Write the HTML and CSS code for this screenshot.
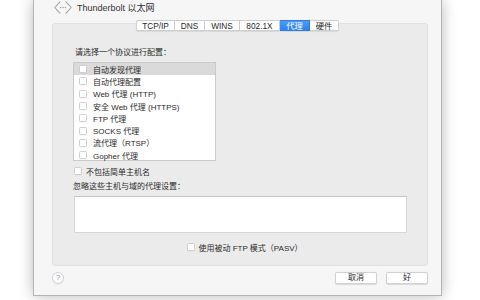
FILE: index.html
```html
<!DOCTYPE html>
<html lang="zh-CN">
<head>
    <meta charset="UTF-8">
    <meta name="viewport" content="width=device-width, initial-scale=1.0">
    <link rel="stylesheet" href="styles.css">
    <title>Thunderbolt 以太网 - 代理</title>
</head>
<body>
    <div class="window">
        <!-- title of the network service -->
        <div class="header">
            <svg class="net-icon" width="20" height="13" viewBox="0 0 20 13">
                <path d="M7 0.8 L1.8 6.5 L7 12.2" fill="none" stroke="#a3a3a3" stroke-width="1.1" stroke-linejoin="round" stroke-linecap="round"/>
                <path d="M13 0.8 L18.2 6.5 L13 12.2" fill="none" stroke="#a3a3a3" stroke-width="1.1" stroke-linejoin="round" stroke-linecap="round"/>
                <circle cx="7.6" cy="6.5" r="0.8" fill="#a3a3a3"/>
                <circle cx="10" cy="6.5" r="0.8" fill="#a3a3a3"/>
                <circle cx="12.4" cy="6.5" r="0.8" fill="#a3a3a3"/>
            </svg>
            <span class="title">Thunderbolt 以太网</span>
        </div>

        <!-- segmented tabs -->
        <div class="tabs">
            <span class="tab tab-tcp">TCP/IP</span>
            <span class="tab tab-dns">DNS</span>
            <span class="tab tab-wins">WINS</span>
            <span class="tab tab-8021x">802.1X</span>
            <span class="tab tab-proxy active">代理</span>
            <span class="tab tab-hw">硬件</span>
        </div>

        <div class="panel">
            <div class="label label-protocols">请选择一个协议进行配置：</div>
            <ul class="proto-list">
                <li class="selected"><span class="check"></span>自动发现代理</li>
                <li><span class="check"></span>自动代理配置</li>
                <li><span class="check"></span>Web 代理 (HTTP)</li>
                <li><span class="check"></span>安全 Web 代理 (HTTPS)</li>
                <li><span class="check"></span>FTP 代理</li>
                <li><span class="check"></span>SOCKS 代理</li>
                <li><span class="check"></span>流代理（RTSP）</li>
                <li><span class="check"></span>Gopher 代理</li>
            </ul>
            <div class="check-row"><span class="check"></span>不包括简单主机名</div>
            <div class="label label-bypass">忽略这些主机与域的代理设置：</div>
            <div class="bypass-box"></div>
            <div class="pasv-row"><span class="check"></span>使用被动 FTP 模式（PASV）</div>
        </div>

        <div class="footer">
            <span class="help">?</span>
            <div class="buttons">
                <button class="btn">取消</button>
                <button class="btn">好</button>
            </div>
        </div>
    </div>
</body>
</html>
```

FILE: styles.css
```css
* {
  margin: 0;
  padding: 0;
  box-sizing: border-box;
}

body {
  background-color: #fff;
  font-family: 'Liberation Sans', 'Noto Sans CJK SC', sans-serif;
  font-size: 8px;
  color: #2a2a2a;
  width: 480px;
  height: 300px;
  overflow: hidden;
}

.window {
  margin-left: 33px;
  width: 409px;
  height: 296px;
  background-color: #f6f6f6;
  border: 1px solid #b4b4b4;
  border-top: none;
  box-shadow: 0 0 14px rgba(0, 0, 0, 0.28);
}

.header {
  height: 14px;
  display: flex;
  align-items: center;
  padding-left: 19px;
  gap: 4px;
}

.net-icon {
  display: block;
}

.title {
  font-size: 9px;
  color: #333;
}

.tabs {
  margin-top: 6px;
  display: flex;
  justify-content: center;
  position: relative;
  z-index: 1;
}

.tab {
  height: 11px;
  line-height: 10px;
  font-size: 8.3px;
  text-align: center;
  background-color: #fff;
  border: 1px solid #cfcfcf;
  border-left: none;
  color: #2a2a2a;
  box-shadow: 0 0.5px 1px rgba(0, 0, 0, 0.08);
}

.tab:first-child {
  border-left: 1px solid #cfcfcf;
  border-radius: 2px 0 0 2px;
}

.tab:last-child {
  border-radius: 0 2px 2px 0;
}

.tab-tcp { width: 39px; }
.tab-dns { width: 30px; }
.tab-wins { width: 35px; }
.tab-8021x { width: 40px; }
.tab-proxy { width: 30px; }
.tab-hw { width: 29px; }

.tab.active {
  background: linear-gradient(#4c9bf8, #2d82f2);
  border-color: #2a7de8;
  color: #fff;
}

.panel {
  margin: -8px 0 0 18px;
  width: 376px;
  height: 243px;
  background-color: #ebebeb;
  border: 1px solid #e1e1e1;
  border-radius: 3px;
  padding: 24px 0 0 20px;
}

.label {
  height: 10px;
  line-height: 10px;
}

.label-protocols {
  margin-left: 2px;
}

.proto-list {
  list-style: none;
  margin-top: 4px;
  width: 143px;
  height: 99px;
  background-color: #fff;
  border: 1px solid #cacaca;
}

.proto-list li {
  height: 12.3px;
  display: flex;
  align-items: center;
  padding-left: 5px;
}

.proto-list li.selected {
  background-color: #dadada;
}

.check {
  display: inline-block;
  width: 8px;
  height: 8px;
  background-color: #fff;
  border: 1px solid #cfcfcf;
  border-radius: 1.5px;
  margin-right: 6px;
  flex-shrink: 0;
  box-shadow: 0 0.5px 0.5px rgba(0, 0, 0, 0.06);
}

.check-row {
  margin-top: 5px;
  margin-left: 1px;
  height: 10px;
  display: flex;
  align-items: center;
}

.check-row .check {
  margin-right: 4px;
}

.label-bypass {
  margin-top: 6px;
}

.bypass-box {
  margin: 4px 0 0 1px;
  width: 333px;
  height: 37px;
  background-color: #fff;
  border: 1px solid #d6d6d6;
  border-top-color: #c4c4c4;
}

.pasv-row {
  margin-top: 9px;
  margin-left: -10px;
  height: 10px;
  display: flex;
  justify-content: center;
  align-items: center;
}

.pasv-row .check {
  margin-right: 3px;
}

.footer {
  margin-top: 6px;
  padding: 0 13px 0 18px;
  display: flex;
  justify-content: space-between;
  align-items: center;
}

.help {
  width: 12px;
  height: 12px;
  border-radius: 50%;
  background-color: #fff;
  border: 1px solid #d4d4d4;
  color: #6f90c0;
  font-size: 8px;
  line-height: 10px;
  text-align: center;
  box-shadow: 0 0.5px 1px rgba(0, 0, 0, 0.1);
}

.buttons {
  display: flex;
  gap: 9px;
}

.btn {
  width: 42px;
  height: 12px;
  font-family: 'Liberation Sans', 'Noto Sans CJK SC', sans-serif;
  font-size: 8px;
  line-height: 10px;
  color: #2a2a2a;
  background-color: #fff;
  border: 1px solid #d2d2d2;
  border-radius: 2px;
  box-shadow: 0 0.5px 1px rgba(0, 0, 0, 0.12);
}
```
